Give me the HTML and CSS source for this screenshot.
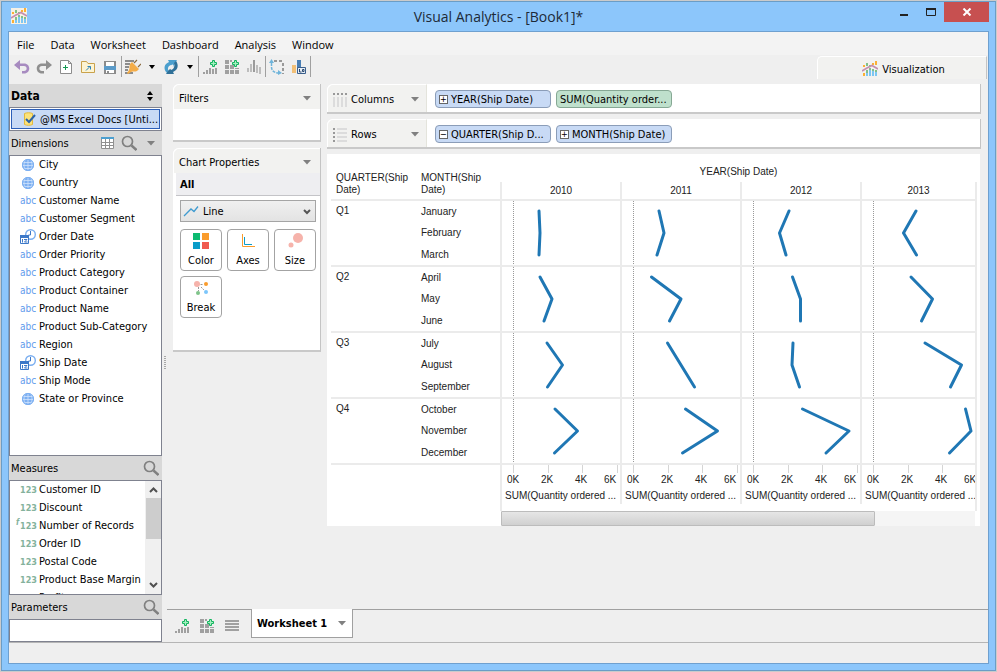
FILE: index.html
```html
<!DOCTYPE html>
<html lang="en">
<head>
    <meta charset="UTF-8">
    <title>Visual Analytics - [Book1]*</title>
    <link rel="stylesheet" href="styles.css">
</head>
<body>
    <!-- Shared icons -->
    <svg class="symbols" aria-hidden="true">
        <symbol id="i-logo" viewBox="0 0 16 16">
            <path fill="#fbb034" d="M1 4h2v2H1zM10 2h2v2h-2zM13 0h2v4h-2zM1 12h2v3H1z"/>
            <path fill="#82c08a" d="M4 2h2v3H4zM7 4h2v1H7zM4 9h2v3H4zM7 7h2v2H7zM10 8h2v2h-2zM13 9h2v2h-2z"/>
            <path fill="#7cc6f2" d="M4 12h2v3H4zM7 9h2v6H7zM10 10h2v5h-2zM13 11h2v4h-2z"/>
            <path fill="none" stroke="#c58fae" stroke-width="1.6" d="M0 10l5-3 5-2.500 6 3.500"/>
        </symbol>
        <symbol id="i-search" viewBox="0 0 16 16">
            <circle cx="6.500" cy="6.500" r="5" fill="none" stroke="#808080" stroke-width="1.700"/>
            <path d="M10.500 10.500l5 4.500" stroke="#808080" stroke-width="2.400"/>
        </symbol>
        <symbol id="i-caret" viewBox="0 0 8 5"><path fill="currentColor" d="M0 0h8L4 4.500z"/></symbol>
        <symbol id="i-globe" viewBox="0 0 14 14">
            <circle cx="7" cy="7" r="6" fill="#7db0f2"/>
            <path fill="none" stroke="#cfe2fb" stroke-width=".8" d="M1 4.500h12M1 7.500h12M2 10.500h10M7 1v12M4.500 1.500c-2 3-2 8 0 11M9.500 1.500c2 3 2 8 0 11"/>
            <circle cx="7" cy="7" r="5.600" fill="none" stroke="#7db0f2"/>
        </symbol>
        <symbol id="i-date" viewBox="0 0 16 16">
            <circle cx="10.500" cy="5.500" r="4.800" fill="#fff" stroke="#7aaef0" stroke-width="1.400"/>
            <path fill="none" stroke="#3c78c8" d="M10.500 2v4h-2"/>
            <path fill="#fff" stroke="#3c78c8" d="M.5 6.500h8v8h-8z"/>
            <path fill="#3c78c8" d="M0 6h9v3H0z"/>
            <path fill="none" stroke="#3c78c8" d="M2.500 10v3.500M4 10.500h3l-2.500 2.500h3"/>
        </symbol>
        <symbol id="i-bars-add" viewBox="0 0 16 16">
            <path fill="#a0a0a0" d="M1 13h2v2H1zM4 11h2v4H4zM7 9h2v6H7zM10 10h2v5h-2zM13 9h2v6h-2z"/>
            <path fill="#a6efc0" stroke="#12b55f" d="M10.500 1.500h2v2h2v2h-2v2h-2v-2h-2v-2h2z"/>
        </symbol>
        <symbol id="i-grid-add" viewBox="0 0 16 16">
            <path fill="#a0a0a0" d="M1 1h4v4H1zM1 6h4v4H1zM1 11h4v4H1zM6 1h2v2H6zM6 6h4v4H6zM6 11h4v4H6zM11 9h4v1h-4zM11 11h4v4h-4z"/>
            <path fill="#a6efc0" stroke="#12b55f" d="M10.500 1.500h2v2h2v2h-2v2h-2v-2h-2v-2h2z"/>
        </symbol>
    </svg>

    <div class="window">
        <header class="titlebar">
            <svg class="app-logo" width="16" height="16"><use href="#i-logo"/></svg>
            <h1>Visual Analytics - [Book1]*</h1>
            <div class="window-buttons">
                <button class="win-btn" aria-label="Minimize"><svg width="10" height="10"><path fill="#222" d="M1 7h8v2H1z"/></svg></button>
                <button class="win-btn" aria-label="Maximize"><svg width="10" height="10"><path fill="none" stroke="#222" d="M.5 2v6.500h9V2"/><path fill="#222" d="M0 1h10v2H0z"/></svg></button>
                <button class="win-btn close" aria-label="Close"><svg width="10" height="8"><path stroke="#fff" stroke-width="2" d="M1.500.5l7 7M8.500.5l-7 7"/></svg></button>
            </div>
        </header>

        <div class="client">
            <nav class="menubar">
                <button>File</button>
                <button>Data</button>
                <button>Worksheet</button>
                <button>Dashboard</button>
                <button>Analysis</button>
                <button>Window</button>
            </nav>

            <div class="top-row">
                <div class="toolbar">
                    <button aria-label="Undo"><svg width="16" height="16"><path fill="#a78bc0" d="M0 6l6-5v3.500h4c7 0 7 10 0 10H8v-2.500h2c3.500 0 3.500-5 0-5H6V11z"/></svg></button>
                    <button aria-label="Redo"><svg width="16" height="16"><path fill="#8f8f8f" d="M16 6l-6-5v3.500H6c-7 0-7 10 0 10h2v-2.500H6c-3.500 0-3.500-5 0-5h4V11z"/></svg></button>
                    <button aria-label="New"><svg width="16" height="16"><path fill="#fff" stroke="#8c8c8c" d="M2.500 1.500h8l3 3v10h-11zM10.500 1.500v3h3"/><path stroke="#159a53" d="M7.500 6v5M5 8.500h5"/></svg></button>
                    <button aria-label="Open"><svg width="16" height="16"><path fill="#fdf4d3" stroke="#c9a24b" d="M1.500 13.500v-11h5l1.500 2h6.500v9z"/><path fill="none" stroke="#2b83ba" d="M6 11.500l4-4M7.500 7.500h3v3"/></svg></button>
                    <button aria-label="Save"><svg width="16" height="16"><path fill="#8c8c8c" d="M2 2h12v13H2z"/><path fill="#fff" d="M4 3h8v5H4z"/><path fill="#5b9bc9" d="M2 7h12v4H2z"/><path fill="#fff" d="M4 11h8v3H4z"/><path fill="#8c8c8c" d="M5 12h2v2H5z"/></svg></button>
                    <span class="sep"></span>
                    <button aria-label="Connect"><svg width="16" height="16"><path fill="#8c8c8c" d="M0 1h9v2H0zM0 4h5v2H0zM0 7h4v2H0zM0 10h3v2H0zM0 13h8v2H0z"/><path fill="#f4ad49" d="M7 3l7 7-2 2c-2 1-4 0-6 1l-3 2-1-1 2-3c1-2 0-4 1-6z"/><path stroke="#8a6a3d" stroke-width="1.200" d="M9 4l3-3M13 8l3-3"/></svg></button>
                    <button class="drop" aria-label="Connect options"><svg width="6" height="4"><path d="M0 0h6L3 4z"/></svg></button>
                    <button aria-label="Refresh"><svg width="16" height="16"><path fill="#4b9fce" d="M5 1h9l-4 7-2-2c-3 1-4 4-2 7l-2 1C0 10 1 5 6 3z"/><path fill="#2f7098" d="M11 15H3l4-6 1 2c3-1 4-4 3-7l2-2c3 4 2 9-3 11z"/><path stroke="#efefef" stroke-width="2" d="M6 10l4-4"/></svg></button>
                    <button class="drop" aria-label="Refresh options"><svg width="6" height="4"><path d="M0 0h6L3 4z"/></svg></button>
                    <span class="sep"></span>
                    <button aria-label="New worksheet"><svg width="16" height="16"><use href="#i-bars-add"/></svg></button>
                    <button aria-label="New dashboard"><svg width="16" height="16"><use href="#i-grid-add"/></svg></button>
                    <button aria-label="Chart"><svg width="16" height="16"><path fill="#bdbdbd" d="M1 9h2v4H1zM4 5h2v8H4zM10 6h2v8h-2zM13 8h2v7h-2z"/><path fill="#9a9a9a" d="M7 1h2v12H7z"/></svg></button>
                    <span class="sep"></span>
                    <button aria-label="Swap axes"><svg width="16" height="16"><path fill="none" stroke="#6fb4da" stroke-width="1.500" stroke-dasharray="3 1" d="M2.500 4v4c0 4 3 6 8 6"/><path fill="#6fb4da" d="M0 4l2.500-4L5 4zM9 11l4 3-4 2z"/><path stroke="#999" stroke-width="2" stroke-dasharray="3 2" d="M5 2h10M14 4v11"/></svg></button>
                    <button aria-label="Labels"><svg width="16" height="16"><path fill="#f2c078" d="M1 6h4v8H1z"/><path fill="#4a7fb5" d="M6 1h4v13H6z"/><path fill="#e8eef5" stroke="#3a5f8c" d="M6.500 8.500h8v6h-8z"/><path fill="none" stroke="#26466e" d="M8.500 10v3h2M11.500 10.500h1.500v2h-1.500z"/></svg></button>
                    <span class="sep"></span>
                </div>
                <button class="view-tab"><svg width="16" height="16"><use href="#i-logo"/></svg>Visualization</button>
            </div>

            <main class="work">
                <aside class="sidebar">
                    <div class="side-head data-head">
                        <h2>Data</h2>
                        <svg class="sorter" width="6" height="10"><path d="M0 4h6L3 0zM0 6h6l-3 4z"/></svg>
                    </div>
                    <div class="source-box">
                        <button class="source">
                            <svg width="13" height="14"><path fill="#fbe27a" stroke="#e2b93c" d="M1.500 1.500c2-1 6-1 8 0v11c-2 1-6 1-8 0z"/><path fill="none" stroke="#2a62a8" stroke-width="2" d="M3 7l3 3 6-7"/></svg>
                            <span>@MS Excel Docs [Unti...</span>
                        </button>
                    </div>
                    <div class="side-head">
                        <h3>Dimensions</h3>
                        <button aria-label="View fields"><svg width="14" height="12"><path fill="#fff" stroke="#909090" d="M.5.5h12v11H.5z"/><path fill="#4c9fd0" d="M0 0h13v2H0z"/><path stroke="#909090" d="M0 5.500h13M0 8.500h13M4.500 2v9M8.500 2v9"/></svg></button>
                        <button aria-label="Find dimension"><svg width="16" height="16"><use href="#i-search"/></svg></button>
                        <button class="caret" aria-label="Dimension options"><svg width="8" height="5"><use href="#i-caret"/></svg></button>
                    </div>
                    <ul class="fields dimensions">
                        <li><svg class="ico" width="14" height="14"><use href="#i-globe"/></svg>City</li>
                        <li><svg class="ico" width="14" height="14"><use href="#i-globe"/></svg>Country</li>
                        <li><span class="ico abc">abc</span>Customer Name</li>
                        <li><span class="ico abc">abc</span>Customer Segment</li>
                        <li><svg class="ico" width="16" height="16"><use href="#i-date"/></svg>Order Date</li>
                        <li><span class="ico abc">abc</span>Order Priority</li>
                        <li><span class="ico abc">abc</span>Product Category</li>
                        <li><span class="ico abc">abc</span>Product Container</li>
                        <li><span class="ico abc">abc</span>Product Name</li>
                        <li><span class="ico abc">abc</span>Product Sub-Category</li>
                        <li><span class="ico abc">abc</span>Region</li>
                        <li><svg class="ico" width="16" height="16"><use href="#i-date"/></svg>Ship Date</li>
                        <li><span class="ico abc">abc</span>Ship Mode</li>
                        <li><svg class="ico" width="14" height="14"><use href="#i-globe"/></svg>State or Province</li>
                    </ul>
                    <div class="side-head">
                        <h3>Measures</h3>
                        <button aria-label="Find measure"><svg width="16" height="16"><use href="#i-search"/></svg></button>
                    </div>
                    <div class="measures">
                        <ul class="fields">
                            <li><span class="ico num">123</span>Customer ID</li>
                            <li><span class="ico num">123</span>Discount</li>
                            <li><span class="ico num calc">123</span>Number of Records</li>
                            <li><span class="ico num">123</span>Order ID</li>
                            <li><span class="ico num">123</span>Postal Code</li>
                            <li><span class="ico num">123</span>Product Base Margin</li>
                            <li><span class="ico num">123</span>Profit</li>
                        </ul>
                        <div class="vscroll">
                            <svg width="9" height="6"><path d="M1 5l3.500-3.500L8 5"/></svg>
                            <div class="thumb"></div>
                            <svg width="9" height="6"><path d="M1 1l3.500 3.500L8 1"/></svg>
                        </div>
                    </div>
                    <div class="side-head">
                        <h3>Parameters</h3>
                        <button aria-label="Find parameter"><svg width="16" height="16"><use href="#i-search"/></svg></button>
                    </div>
                    <div class="parameters"></div>
                </aside>

                <div class="splitter"></div>

                <div class="desk">
                    <div class="cards">
                        <section class="card filters">
                            <div class="card-head"><h3>Filters</h3><svg width="8" height="5"><use href="#i-caret"/></svg></div>
                        </section>
                        <section class="card props">
                            <div class="card-head"><h3>Chart Properties</h3><svg width="8" height="5"><use href="#i-caret"/></svg></div>
                            <h4>All</h4>
                            <div class="chart-type">
                                <svg class="type-icon" width="16" height="12"><path fill="none" stroke="#3f9bd0" stroke-width="1.300" d="M1 11l7-7 3 2.500L15 1.500"/></svg>
                                <select aria-label="Chart type">
                                    <option>Line</option>
                                </select>
                                <svg class="type-arrow" width="8" height="6"><path fill="none" stroke="#555" stroke-width="2" d="M1 1l3 3 3-3"/></svg>
                            </div>
                            <div class="prop-buttons">
                                <button><svg width="18" height="18"><path fill="#0cba70" d="M1 1h7v7H1z"/><path fill="#fa9c2d" d="M10 1h7v7h-7z"/><path fill="#0a9cc9" d="M1 10h7v7H1z"/><path fill="#f05a50" d="M10 10h7v7h-7z"/></svg>Color</button>
                                <button><svg width="18" height="18"><path fill="none" stroke="#fa9c2d" d="M3.500 2v12.500H16"/><path fill="none" stroke="#0a9cc9" d="M5.500 5v7.500H13"/></svg>Axes</button>
                                <button><svg width="18" height="18"><circle cx="12" cy="6" r="5" fill="#f6b3ab"/><circle cx="5" cy="13" r="2.500" fill="#f6b3ab"/></svg>Size</button>
                                <button><svg width="18" height="18"><circle cx="5" cy="5" r="3" fill="#f6b3ab"/><circle cx="14" cy="5" r="2" fill="#fa9c2d"/><circle cx="6" cy="14" r="2" fill="#7fc48a"/><circle cx="14" cy="13" r="2" fill="#7cc6fb"/><path stroke="#999" stroke-dasharray="2 1" d="M8.500 5.500h3M6.500 8v4M9 8l3 3"/></svg>Break</button>
                            </div>
                        </section>
                    </div>

                    <div class="view">
                        <div class="shelf">
                            <div class="shelf-label">
                                <svg width="16" height="16"><path stroke="#999" stroke-width="2" stroke-dasharray="2 2" d="M1 2h14"/><path stroke="#dcdcdc" stroke-width="2" d="M2 5v10M6 5v10M10 5v10M14 5v10"/></svg>
                                Columns
                                <svg class="shelf-caret" width="8" height="5"><use href="#i-caret"/></svg>
                            </div>
                            <button class="pill"><span class="toggle">+</span>YEAR(Ship Date)</button>
                            <button class="pill measure">SUM(Quantity order...</button>
                        </div>
                        <div class="shelf">
                            <div class="shelf-label">
                                <svg width="16" height="16"><path stroke="#999" stroke-width="2" stroke-dasharray="2 2" d="M2 1v14"/><path stroke="#dcdcdc" stroke-width="2" d="M5 2h10M5 6h10M5 10h10M5 14h10"/></svg>
                                Rows
                                <svg class="shelf-caret" width="8" height="5"><use href="#i-caret"/></svg>
                            </div>
                            <button class="pill"><span class="toggle">&minus;</span>QUARTER(Ship D...</button>
                            <button class="pill"><span class="toggle">+</span>MONTH(Ship Date)</button>
                        </div>

                        <div class="chart-panel">
                            <table class="chart">
                                <colgroup>
                                    <col class="c-quarter"><col class="c-month"><col class="c-year"><col class="c-year"><col class="c-year"><col>
                                </colgroup>
                                <thead>
                                    <tr class="field-row">
                                        <th rowspan="2" class="row-field">QUARTER(Ship Date)</th>
                                        <th rowspan="2" class="row-field month">MONTH(Ship Date)</th>
                                        <th colspan="4" class="column-field">YEAR(Ship Date)</th>
                                    </tr>
                                    <tr class="year-row"><th class="y">2010</th><th class="y">2011</th><th class="y">2012</th><th class="y">2013</th></tr>
                                </thead>
                                <tbody>
                                    <tr>
                                        <th rowspan="3" class="quarter">Q1</th><th class="month">January</th>
                                        <td rowspan="3"><svg><line x1="11.500" x2="11.500" y2="64"/><polyline points="37,10 38,32 37,54"/></svg></td>
                                        <td rowspan="3"><svg><line x1="11.500" x2="11.500" y2="64"/><polyline points="37,10 42,32 35,54"/></svg></td>
                                        <td rowspan="3"><svg><line x1="11.500" x2="11.500" y2="64"/><polyline points="47,10 37.500,32 44,54"/></svg></td>
                                        <td rowspan="3"><svg><line x1="11.500" x2="11.500" y2="64"/><polyline points="54,10 41.500,32 54.500,54"/></svg></td>
                                    </tr>
                                    <tr><th class="month">February</th></tr>
                                    <tr><th class="month">March</th></tr>
                                </tbody>
                                <tbody>
                                    <tr>
                                        <th rowspan="3" class="quarter">Q2</th><th class="month">April</th>
                                        <td rowspan="3"><svg><line x1="11.500" x2="11.500" y2="64"/><polyline points="38,10 50,32 42,54"/></svg></td>
                                        <td rowspan="3"><svg><line x1="11.500" x2="11.500" y2="64"/><polyline points="29.500,10 59,32 47.500,54"/></svg></td>
                                        <td rowspan="3"><svg><line x1="11.500" x2="11.500" y2="64"/><polyline points="50.500,10 58.500,32 58.500,54"/></svg></td>
                                        <td rowspan="3"><svg><line x1="11.500" x2="11.500" y2="64"/><polyline points="49,10 70.500,32 59.500,54"/></svg></td>
                                    </tr>
                                    <tr><th class="month">May</th></tr>
                                    <tr><th class="month">June</th></tr>
                                </tbody>
                                <tbody>
                                    <tr>
                                        <th rowspan="3" class="quarter">Q3</th><th class="month">July</th>
                                        <td rowspan="3"><svg><line x1="11.500" x2="11.500" y2="64"/><polyline points="45,10 60.500,32 45.500,54"/></svg></td>
                                        <td rowspan="3"><svg><line x1="11.500" x2="11.500" y2="64"/><polyline points="45.500,10 59,32 72.500,54"/></svg></td>
                                        <td rowspan="3"><svg><line x1="11.500" x2="11.500" y2="64"/><polyline points="51,10 50,32 57.500,54"/></svg></td>
                                        <td rowspan="3"><svg><line x1="11.500" x2="11.500" y2="64"/><polyline points="63,10 99.500,32 88.500,54"/></svg></td>
                                    </tr>
                                    <tr><th class="month">August</th></tr>
                                    <tr><th class="month">September</th></tr>
                                </tbody>
                                <tbody>
                                    <tr>
                                        <th rowspan="3" class="quarter">Q4</th><th class="month">October</th>
                                        <td rowspan="3"><svg><line x1="11.500" x2="11.500" y2="64"/><polyline points="53,10 75.500,32 52.500,54"/></svg></td>
                                        <td rowspan="3"><svg><line x1="11.500" x2="11.500" y2="64"/><polyline points="63.500,10 95.500,32 60.500,54"/></svg></td>
                                        <td rowspan="3"><svg><line x1="11.500" x2="11.500" y2="64"/><polyline points="60.500,10 107,32 84,54"/></svg></td>
                                        <td rowspan="3"><svg><line x1="11.500" x2="11.500" y2="64"/><polyline points="103.500,10 109,32 87.500,54"/></svg></td>
                                    </tr>
                                    <tr><th class="month">November</th></tr>
                                    <tr><th class="month">December</th></tr>
                                </tbody>
                                <tfoot>
                                    <tr>
                                        <td colspan="2" class="corner"></td>
                                        <td class="axis"><svg><path d="M11.500 0v8M46.500 0v8M80.500 0v8M115.500 0v8"/><text x="11" y="18">0K</text><text x="45" y="18">2K</text><text x="79" y="18">4K</text><text x="108" y="18">6K</text></svg><p>SUM(Quantity ordered ...</p></td>
                                        <td class="axis"><svg><path d="M11.500 0v8M46.500 0v8M80.500 0v8M115.500 0v8"/><text x="11" y="18">0K</text><text x="45" y="18">2K</text><text x="79" y="18">4K</text><text x="108" y="18">6K</text></svg><p>SUM(Quantity ordered ...</p></td>
                                        <td class="axis"><svg><path d="M11.500 0v8M46.500 0v8M80.500 0v8M115.500 0v8"/><text x="11" y="18">0K</text><text x="45" y="18">2K</text><text x="79" y="18">4K</text><text x="108" y="18">6K</text></svg><p>SUM(Quantity ordered ...</p></td>
                                        <td class="axis"><svg><path d="M11.500 0v8M46.500 0v8M80.500 0v8"/><text x="11" y="18">0K</text><text x="45" y="18">2K</text><text x="79" y="18">4K</text><text x="108" y="18">6K</text></svg><p>SUM(Quantity ordered ...</p></td>
                                    </tr>
                                </tfoot>
                            </table>
                            <div class="chart-tail"></div>
                            <div class="hscroll"><div class="thumb"></div></div>
                        </div>
                    </div>

                    <footer class="sheets">
                        <button aria-label="Add worksheet"><svg width="16" height="16"><use href="#i-bars-add"/></svg></button>
                        <button aria-label="Add dashboard"><svg width="16" height="16"><use href="#i-grid-add"/></svg></button>
                        <button aria-label="Sheet list"><svg width="16" height="16"><path fill="#a0a0a0" d="M1 2h14v2H1zM1 5h14v2H1zM1 8h14v2H1zM1 11h14v2H1z"/></svg></button>
                        <button class="sheet-tab">Worksheet 1<svg width="8" height="5"><use href="#i-caret"/></svg></button>
                    </footer>
                </div>
            </main>

            <div class="statusbar"></div>
        </div>
    </div>
</body>
</html>
```
FILE: styles.css
```css
* {
    margin: 0;
    padding: 0;
    box-sizing: border-box;
}

body {
    background-color: #cbcbcb;
    display: flex;
    min-height: 100vh;
    padding: 1px;
    font-family: 'DejaVu Sans Condensed', 'DejaVu Sans', sans-serif;
    font-size: 11px;
    color: #000;
}

button {
    display: flex;
    align-items: center;
    background: none;
    border: 0;
    font: inherit;
    color: inherit;
}

h1, h2, h3, h4 {
    font-size: inherit;
    font-weight: normal;
}

svg {
    flex: none;
    display: block;
}

ul {
    list-style: none;
}

.symbols {
    position: absolute;
    width: 0;
    height: 0;
}

/* Window frame */
.window {
    flex: 1;
    display: flex;
    flex-direction: column;
    padding: 0 6px 6px;
    background-color: #8cc6fb;
    border: 1px solid #6b9dc6;
}

.titlebar {
    display: grid;
    grid-template-columns: 1fr auto 1fr;
    height: 29px;
}

.app-logo {
    margin: 6px 0 0 3px;
    background-color: #f6f1e6;
}

.titlebar h1 {
    font: 14px/30px 'Open Sans', sans-serif;
    color: #1c2a38;
}

.window-buttons {
    display: flex;
    justify-content: flex-end;
    align-items: flex-start;
}

.win-btn {
    width: 27px;
    height: 20px;
    justify-content: center;
}

.win-btn.close {
    width: 45px;
    background-color: #c75050;
}

.client {
    flex: 1;
    display: flex;
    flex-direction: column;
    background-color: #efefef;
    border: 1px solid #6fa0cf;
}

.menubar {
    display: flex;
    gap: 16px;
    height: 23px;
    padding: 2px 8px 0;
    background-color: #f3f3f3;
    font: 11px 'Open Sans', sans-serif;
}

.top-row {
    display: flex;
    justify-content: space-between;
    height: 29px;
}

.toolbar {
    display: flex;
    height: 23px;
    padding-left: 2px;
}

.toolbar button {
    width: 22px;
    justify-content: center;
}

.toolbar .drop {
    width: 16px;
}

.sep {
    width: 1px;
    margin: 1px 0;
    background-color: #a0a0a0;
}

.view-tab {
    width: 170px;
    height: 23px;
    justify-content: center;
    gap: 4px;
    margin: 1px 1px 0 0;
    padding: 2px 0 0 3px;
    background-color: #f2f2f0;
    border-top: 1px solid #fff;
    border-left: 1px solid #fff;
    border-right: 1px solid #c4c4c4;
    border-radius: 5px 0 0 0;
}

.work {
    flex: 1;
    display: flex;
}

/* Data panel */
.sidebar {
    width: 153px;
    display: flex;
    flex-direction: column;
}

.side-head {
    display: flex;
    align-items: center;
    gap: 6px;
    height: 24px;
    padding: 0 3px 0 2px;
    background-color: #d8d8d8;
}

.side-head h2,
.side-head h3 {
    flex: 1;
}

.side-head h2 {
    font-size: 12px;
    font-weight: bold;
}

.side-head .caret {
    color: #808080;
    padding: 0 4px;
}

.data-head {
    height: 23px;
}

.sorter {
    margin-right: 6px;
}

.source-box,
.fields,
.measures,
.parameters {
    background-color: #fff;
    border: 1px solid #7f828f;
}

.source-box {
    height: 24px;
    padding: 1px;
}

.source {
    width: 100%;
    height: 20px;
    gap: 4px;
    padding-left: 11px;
    background-color: #c8daf5;
    border: 1px solid #2c5fb8;
    white-space: nowrap;
}

.fields li {
    display: flex;
    align-items: center;
    height: 18px;
    padding-bottom: 1px;
    white-space: nowrap;
}

.dimensions {
    flex: 1;
}

.ico {
    width: 16px;
    margin: 0 3px 0 10px;
    text-align: center;
}

.abc {
    font-size: 10px;
    color: #5f9cec;
}

.num {
    position: relative;
    font-size: 9px;
    font-weight: bold;
    color: #84b29c;
}

.calc::before {
    content: "f";
    position: absolute;
    left: -4px;
    top: -3px;
    font-size: 8px;
    font-style: italic;
}

.measures {
    display: flex;
    height: 115px;
    overflow: hidden;
}

.measures .fields {
    flex: 1;
    border: 0;
}

.vscroll {
    width: 16px;
    display: flex;
    flex-direction: column;
    align-items: center;
    padding: 6px 0;
    background-color: #f0f0f0;
}

.vscroll path {
    fill: none;
    stroke: #505050;
    stroke-width: 2;
}

.vscroll .thumb {
    width: 15px;
    height: 41px;
    margin: 5px 0 auto;
    background-color: #cdcdcd;
}

.parameters {
    height: 23px;
}

.splitter {
    width: 5px;
    display: flex;
    align-items: center;
    justify-content: center;
}

.splitter::before {
    content: "";
    width: 2px;
    height: 14px;
    background: repeating-linear-gradient(#a8a8a8 0 1px, #efefef 1px 2px);
}

/* Cards, shelves and chart */
.desk {
    flex: 1;
    min-width: 0;
    display: grid;
    grid-template-columns: auto 1fr;
    grid-template-rows: 1fr auto;
}

.cards {
    width: 154px;
    padding-left: 6px;
}

.card {
    margin-bottom: 6px;
    background-color: #fff;
    border-right: 1px solid #c4c4c4;
    border-bottom: 2px solid #c9c9c9;
    border-radius: 6px 0 0 0;
}

.filters {
    height: 58px;
}

.props {
    height: 204px;
}

.card-head {
    display: flex;
    align-items: center;
    justify-content: space-between;
    height: 25px;
    padding: 2px 9px 0 5px;
    background-color: #f2f2f0;
    border-top: 1px solid #fff;
    border-left: 1px solid #fff;
    border-radius: 6px 0 0 0;
    color: #000;
}

.card-head svg,
.shelf-caret,
.sheet-tab svg {
    color: #808080;
}

.card h4 {
    height: 23px;
    margin-left: 3px;
    padding-left: 4px;
    font-weight: bold;
    line-height: 24px;
    background-color: #eeeef1;
    border-bottom: 1px solid #c4c4c8;
}

.chart-type {
    position: relative;
    margin: 4px 4px 7px 7px;
}

.chart-type select {
    display: block;
    width: 100%;
    height: 22px;
    padding-left: 22px;
    appearance: none;
    background: linear-gradient(#f0f0f0, #e3e3e3);
    border: 1px solid #a5a5a5;
    border-radius: 0;
    font: inherit;
    color: #000;
}

.type-icon {
    position: absolute;
    left: 3px;
    top: 5px;
}

.type-arrow {
    position: absolute;
    right: 5px;
    top: 9px;
}

.prop-buttons {
    display: grid;
    grid-template-columns: repeat(3, 1fr);
    gap: 5px;
    margin: 0 4px 0 7px;
}

.prop-buttons button {
    height: 42px;
    flex-direction: column;
    gap: 4px;
    padding-top: 2px;
    background-color: #fff;
    border: 1px solid #a3a3a3;
    border-radius: 4px;
}

.view {
    min-width: 0;
    padding: 0 7px 0 6px;
}

.shelf {
    display: flex;
    align-items: center;
    gap: 5px;
    height: 30px;
    margin-bottom: 5px;
    background-color: #fff;
    border-right: 1px solid #c4c4c4;
    border-bottom: 2px solid #c9c9c9;
    border-radius: 6px 0 0 0;
}

.shelf-label {
    display: flex;
    align-items: center;
    gap: 3px;
    width: 100px;
    height: 28px;
    margin-right: 3px;
    padding: 2px 7px 0 4px;
    background-color: #f2f2f0;
    border-top: 1px solid #fff;
    border-left: 1px solid #fff;
    border-right: 1px solid #e4e4dc;
    border-radius: 6px 0 0 0;
}

.shelf-caret {
    margin-left: auto;
}

.pill {
    width: 116px;
    height: 18px;
    margin-top: 2px;
    padding: 0 2px 0 3px;
    gap: 3px;
    background-color: #c8daf5;
    border: 1px solid #8b9db8;
    border-radius: 4px;
    white-space: nowrap;
}

.pill.measure {
    background-color: #bfe0cc;
    border-color: #86a894;
}

.toggle {
    width: 9px;
    height: 9px;
    background-color: #fff;
    border: 1px solid #666;
    line-height: 7px;
    font-size: 9px;
}

.chart-panel {
    padding: 0 3px 0 4px;
    background-color: #fff;
    margin-right: 1px;
}

.chart {
    width: 100%;
    table-layout: fixed;
    border-spacing: 0;
    font: 10px/12px 'Liberation Sans', Arial, sans-serif;
    color: #222;
}

.chart th {
    font-weight: normal;
}

.c-quarter {
    width: 90px;
}

.c-month {
    width: 79px;
}

.c-year {
    width: 120px;
}

.field-row {
    height: 28px;
}

.column-field {
    padding-bottom: 4px;
    vertical-align: bottom;
}

.year-row {
    height: 17px;
}

.month {
    height: 22px;
    padding-top: 2px;
    text-align: left;
}

.row-field {
    padding: 0 10px 3px 5px;
    text-align: left;
    vertical-align: bottom;
}

.row-field.month {
    padding-left: 0;
}

.quarter {
    padding: 4px 0 0 5px;
    text-align: left;
    vertical-align: top;
}

tbody tr:first-child > *,
tfoot td {
    border-top: 2px solid #ebebeb;
}

.y,
.chart td:not(.corner) {
    border-left: 2px solid #ebebeb;
}

.y:last-child,
.chart td:last-child {
    border-right: 2px solid #ebebeb;
}

.chart tbody svg {
    width: 100%;
    height: 64px;
}

.chart line {
    stroke: #999;
    stroke-dasharray: 1 1;
}

.chart polyline {
    fill: none;
    stroke: #1f77b4;
    stroke-width: 3;
    stroke-linecap: round;
    stroke-linejoin: round;
}

.axis {
    height: 41px;
    vertical-align: top;
}

.axis svg {
    width: 100%;
    height: 25px;
}

.axis path {
    stroke: #d5d5d5;
}

.axis text {
    fill: #222;
    text-anchor: middle;
}

.axis p {
    padding-left: 3px;
    overflow: hidden;
    white-space: nowrap;
}

.chart-tail {
    height: 7px;
    margin-left: 169px;
    border-left: 2px solid #ebebeb;
    border-right: 2px solid #ebebeb;
}

.hscroll {
    height: 15px;
    margin: 0 2px 0 170px;
    background-color: #f5f5f5;
}

.hscroll .thumb {
    width: 79%;
    height: 15px;
    background: linear-gradient(#e6e6e6, #d0d0d0);
    border: 1px solid #bcbcbc;
    border-radius: 1px;
}

/* Sheet tabs */
.sheets {
    grid-column: 1 / -1;
    display: flex;
    gap: 9px;
    height: 33px;
    padding-left: 7px;
    border-top: 1px solid #a0a0a0;
}

.sheet-tab {
    height: 29px;
    margin: -1px 0 0 2px;
    padding: 0 6px 0 5px;
    gap: 11px;
    background-color: #fff;
    border: 1px solid #a0a0a0;
    border-top: 0;
    font-weight: bold;
}

.statusbar {
    height: 21px;
    border-top: 1px solid #b5b5b5;
}
```
